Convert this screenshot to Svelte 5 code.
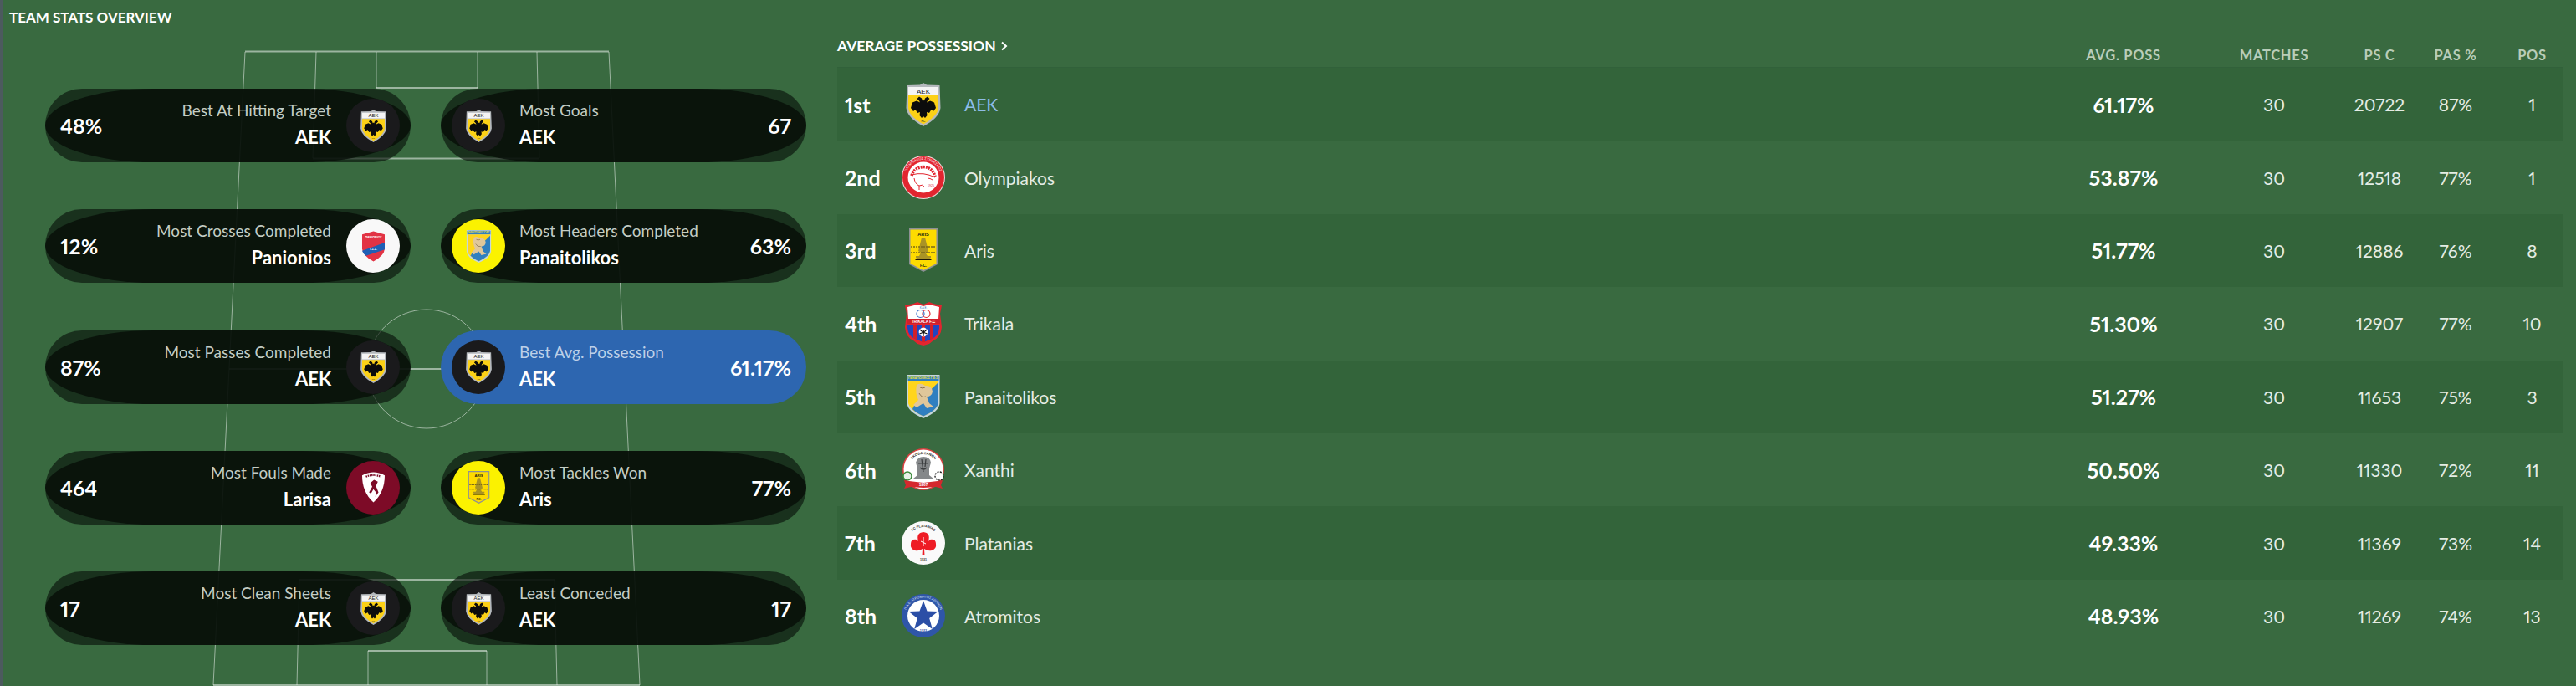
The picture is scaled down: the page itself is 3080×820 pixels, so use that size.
<script>
  const pills = [
    { label: 'Best At Hitting Target', team: 'AEK', value: '48%', crest: 'aek', side: 'left' },
    { label: 'Most Goals', team: 'AEK', value: '67', crest: 'aek', side: 'right' },
    { label: 'Most Crosses Completed', team: 'Panionios', value: '12%', crest: 'panionios', side: 'left', disc: 'white' },
    { label: 'Most Headers Completed', team: 'Panaitolikos', value: '63%', crest: 'panaitolikos', side: 'right', disc: 'yellow' },
    { label: 'Most Passes Completed', team: 'AEK', value: '87%', crest: 'aek', side: 'left' },
    { label: 'Best Avg. Possession', team: 'AEK', value: '61.17%', crest: 'aek', side: 'right', active: true },
    { label: 'Most Fouls Made', team: 'Larisa', value: '464', crest: 'larisa', side: 'left', disc: 'maroon' },
    { label: 'Most Tackles Won', team: 'Aris', value: '77%', crest: 'aris', side: 'right', disc: 'yellow' },
    { label: 'Most Clean Sheets', team: 'AEK', value: '17', crest: 'aek', side: 'left' },
    { label: 'Least Conceded', team: 'AEK', value: '17', crest: 'aek', side: 'right' },
  ];

  const rows = [
    { rank: '1st', crest: 'aek', team: 'AEK', poss: '61.17%', matches: 30, psc: 20722, pas: '87%', pos: 1, link: true },
    { rank: '2nd', crest: 'olympiakos', team: 'Olympiakos', poss: '53.87%', matches: 30, psc: 12518, pas: '77%', pos: 1 },
    { rank: '3rd', crest: 'aris', team: 'Aris', poss: '51.77%', matches: 30, psc: 12886, pas: '76%', pos: 8 },
    { rank: '4th', crest: 'trikala', team: 'Trikala', poss: '51.30%', matches: 30, psc: 12907, pas: '77%', pos: 10 },
    { rank: '5th', crest: 'panaitolikos', team: 'Panaitolikos', poss: '51.27%', matches: 30, psc: 11653, pas: '75%', pos: 3 },
    { rank: '6th', crest: 'xanthi', team: 'Xanthi', poss: '50.50%', matches: 30, psc: 11330, pas: '72%', pos: 11 },
    { rank: '7th', crest: 'platanias', team: 'Platanias', poss: '49.33%', matches: 30, psc: 11369, pas: '73%', pos: 14 },
    { rank: '8th', crest: 'atromitos', team: 'Atromitos', poss: '48.93%', matches: 30, psc: 11269, pas: '74%', pos: 13 },
  ];
</script>

{#snippet crest(kind, size)}
  <svg class="crest" width={size} height={size} viewBox="0 0 52 52">
    {#if kind === 'aek'}
      <path d="M26 0L30 2.5L45.5 3L46.5 30Q45 42 26 52Q7 42 5.5 30L6.5 3L22 2.5Z" fill="#b4b8bc" />
      <rect x="8" y="5" width="36" height="9" fill="#f4f4f4" />
      <text x="26" y="12.6" class="t" font-size="8" text-anchor="middle" fill="#222">AEK</text>
      <path d="M8 15H44V30Q43 40 26 49.5Q9 40 8 30Z" fill="#fcd116" />
      <path d="M21 16.5L24 18.5L25 21.5L26 20.5L27 21.5L28 18.5L31 16.5L33.5 19L31 21.5L30 23.5L34 21.5L39 23.5L41 30L38 34L35.5 32L33 36L30 35L30.5 39L28 42L26 40L24 42L21.5 39L22 35L19 36L16.5 32L14 34L11 30L13 23.5L18 21.5L22 23.5L21 21.5L18.5 19Z" fill="#0c0c0c" />
      <text x="26" y="47" class="t" font-size="2.8" font-weight="700" text-anchor="middle" fill="#333">F.C.</text>
    {:else if kind === 'olympiakos'}
      <circle cx="26" cy="26" r="26" fill="#f0dcdc" />
      <circle cx="26" cy="26" r="25" fill="#e2252f" />
      <path id="oly-ring" d="M5 26A21 21 0 0 1 47 26" fill="none" />
      <text class="t" font-size="4" fill="#fff"><textPath href="#oly-ring" startOffset="50%" text-anchor="middle">ΟΛΥΜΠΙΑΚΟΣ ΣΥΝΔΕΣΜΟΣ</textPath></text>
      <circle cx="26" cy="26" r="18.5" fill="#fff" />
      <path d="M12 24Q15 14 26 13.5Q37 14 40 25" fill="none" stroke="#e2252f" stroke-width="3.6" stroke-dasharray="2 1.1" />
      <path d="M12 23Q26 19 40 26" fill="none" stroke="#e2252f" stroke-width="1" />
      <path d="M15 27Q16 34 21 36L21 41M37 29Q34 27 31 27M21 36Q25 34 27 37" fill="none" stroke="#e2252f" stroke-width="1" />
      <text x="35" y="37" class="t" font-size="3.6" fill="#e2252f" text-anchor="middle">1925</text>
    {:else if kind === 'aris'}
      <path d="M9 0H43V43L26 52L9 43Z" fill="#8d9094" />
      <path d="M10.5 1.5H41.5V42L26 50L10.5 42Z" fill="#fedb00" />
      <text x="26" y="9" class="t" font-size="5.6" font-weight="700" text-anchor="middle" fill="#1a1a10">ARIS</text>
      <path d="M24 11H28L30 19L32 27L29 30L31 33H35V35L32 37H20L17 35V33H21L23 29L20 27L22 19Z" fill="#a99325" />
      <path d="M11 22H41M11 29H41" stroke="#7a6a1a" stroke-width="1.4" stroke-dasharray="2 1" />
      <path d="M18 36H34L36 38H16Z" fill="#1d1a08" />
      <text x="26" y="46" class="t" font-size="4.6" font-weight="700" text-anchor="middle" fill="#1a1a10">F.C.</text>
    {:else if kind === 'trikala'}
      <path d="M4 4L14 2L19 0L26 3L33 0L38 2L48 4L46 14L48 30Q47 42 38 46L33 50L26 52L19 50L14 46Q5 42 4 30L6 14Z" fill="#e2252f" />
      <path d="M7 6L19 3L26 5L33 3L45 6L44 20H8Z" fill="#fff" />
      <circle cx="22.5" cy="14" r="4.5" fill="none" stroke="#3069c6" stroke-width="1.2" />
      <circle cx="29.5" cy="14" r="4.5" fill="none" stroke="#e2252f" stroke-width="1.2" />
      <text x="26" y="7.6" class="t" font-size="3" text-anchor="middle" fill="#3069c6">Κ.Α.Ε.</text>
      <rect x="6" y="20" width="40" height="6" fill="#d11f2b" />
      <text x="26" y="25" class="t" font-size="4.7" font-weight="700" text-anchor="middle" fill="#fff">TRIKALA F.C</text>
      <path d="M7 27H45V31Q44 41 36 44L26 48L16 44Q8 41 7 31Z" fill="#2146c0" />
      <path d="M14 27H18V45L14 43ZM24 27H28V48H24ZM34 27H38V43L34 45Z" fill="#d11f2b" />
      <circle cx="26" cy="36" r="5.4" fill="#fff" />
      <circle cx="26" cy="36" r="2" fill="#111" />
      <path d="M22 33L24 35M30 33L28 35M26 41V38M21.5 38L24 37M30.5 38L28 37" stroke="#111" stroke-width="1.2" />
    {:else if kind === 'panaitolikos'}
      <path d="M6.5 0H45.5V34Q45 44 26 52Q7 44 6.5 34Z" fill="#c5d6de" />
      <rect x="7.5" y="1" width="37" height="6" fill="#2f7fc0" />
      <text x="26" y="5.4" class="t" font-size="3.4" font-weight="700" text-anchor="middle" fill="#f6e23a">ΠΑΝΑΙΤΩΛΙΚΟΣ Γ.Φ.Σ.</text>
      <path d="M8 7H44V33Q43 42 26 49.5Q9 42 8 33Z" fill="#ffd51c" />
      <path d="M44 9V33Q43 42 26 49.5Q16 45 12 40Z" fill="#2f7fc0" />
      <path d="M8 12L8 33Q9 38 13 41L20 24L14 11Z" fill="#ffd51c" />
      <path d="M18 12Q23 9 28 13Q36 12 37 20Q36 26 30 26L33 34L38 38L30 40L26 34L18 39L14 36L20 30Q16 22 18 12Z" fill="#e0c79a" />
      <path d="M21 22Q24 28 29 26M22 15Q25 17 28 15" fill="none" stroke="#8a7450" stroke-width="1" />
    {:else if kind === 'xanthi'}
      <circle cx="26" cy="25" r="25" fill="#d94040" />
      <circle cx="26" cy="25" r="23.5" fill="#fff" />
      <path id="xan-ring" d="M8 25A18 18 0 0 1 44 25" fill="none" />
      <text class="t" font-size="4.2" font-weight="700" fill="#222"><textPath href="#xan-ring" startOffset="50%" text-anchor="middle">SKODA ΞΑΝΘΗ</textPath></text>
      <path d="M17 17Q19 10 26 10Q34 10 35 17L33 24L33 32L38 36H14L19 32L19 24Z" fill="#85888a" />
      <path d="M20 18H32M22 23Q26 27 30 23M24 13L26 28M29 13L28 22" fill="none" stroke="#3a3c3e" stroke-width="1.2" />
      <circle cx="7" cy="33" r="5" fill="#e8f1e8" stroke="#3b8a3b" stroke-width="1.5" />
      <circle cx="45" cy="33" r="5" fill="#fff" stroke="#222" stroke-width="1.4" stroke-dasharray="2 1.4" />
      <path d="M3 38L9 39L26 41L43 39L49 38L47 44L49 48L41 46L26 47L11 46L3 48L5 44Z" fill="#d4282e" />
      <text x="26" y="45" class="t" font-size="4.8" font-weight="700" text-anchor="middle" fill="#fff">1967</text>
    {:else if kind === 'platanias'}
      <circle cx="26" cy="26" r="26" fill="#fafafa" />
      <path id="pla-ring" d="M7 26A19 19 0 0 1 45 26" fill="none" />
      <text class="t" font-size="4" font-weight="700" fill="#333"><textPath href="#pla-ring" startOffset="50%" text-anchor="middle">FC PLATANIAS</textPath></text>
      <path d="M24.5 41L25 33Q21 36 16 35Q10 33 11 27Q11 21 18 22Q19 23 20 24Q17 14 26 13Q35 14 32 24Q33 23 34 22Q41 21 41 27Q42 33 36 35Q31 36 27 33L27.5 41Z" fill="#ee1c25" />
      <path d="M26 19V30M23 24L29 27" stroke="#fff" stroke-width="1" />
      <text x="26" y="47" class="t" font-size="3.6" font-weight="700" text-anchor="middle" fill="#333">1931</text>
    {:else if kind === 'atromitos'}
      <circle cx="26" cy="26" r="26" fill="#2f56a8" />
      <path id="atr-ring" d="M4.5 26A21.5 21.5 0 0 1 47.5 26" fill="none" />
      <text class="t" font-size="3.8" fill="#dfe8f7"><textPath href="#atr-ring" startOffset="50%" text-anchor="middle">Π.Α.Ε. ΑΤΡΟΜΗΤΟΣ ΑΘΗΝΩΝ</textPath></text>
      <circle cx="26" cy="26" r="19" fill="#fff" />
      <path d="M26 8L30.5 20.5L43.5 21L33.2 29L36.8 42L26 34.5L15.2 42L18.8 29L8.5 21L21.5 20.5Z" fill="#2b4ea6" />
      <text x="26" y="45" class="t" font-size="3.8" font-weight="700" text-anchor="middle" fill="#2b4ea6">1923</text>
    {:else if kind === 'panionios'}
      <path d="M26 2L44 7V30Q43 41 26 50Q9 41 8 30V7Z" fill="#e23344" />
      <text x="26" y="13.6" class="t" font-size="4.8" font-weight="700" text-anchor="middle" fill="#fff">ΠΑΝΙΩΝΙΟΣ</text>
      <path d="M8 33L44 20V31L14 41Q9 37 8 33Z" fill="#1f5fb5" />
      <text x="26" y="32.5" class="t" font-size="4.6" font-weight="700" text-anchor="middle" fill="#fff">Γ.Σ.Σ.</text>
    {:else if kind === 'larisa'}
      <path d="M26 2Q35 2 44 7Q44 34 26 50Q8 34 8 7Q17 2 26 2Z" fill="#fff" />
      <path d="M14 9Q26 4 38 9" fill="none" stroke="#7d0b27" stroke-width="3" stroke-dasharray="2 1" />
      <path d="M27 14L33 17L30 24L34 34L29 41L30 34L26 29L22 36L19 34L24 25L21 19Z" fill="#7d0b27" />
    {/if}
  </svg>
{/snippet}

<div class="page">
  <section class="overview">
    <h2 class="title">TEAM STATS OVERVIEW</h2>

    <svg class="pitch" width="990" height="820" viewBox="0 0 990 820">
      <g fill="none" stroke="#fff" stroke-opacity=".5" stroke-width="1">
        <path d="M293 62L255 819M728 62L765 819" />
        <path d="M378 62L374 189M642 62L645 189" />
        <path d="M450 62V105M571 62V105" />
        <path d="M358 693L355 819M663 693L666 819" />
        <path d="M440 778V819M582 778V819" />
        <circle cx="510" cy="441" r="71" />
      </g>
      <g stroke="#fff" stroke-opacity=".5" stroke-width="2" fill="none">
        <path d="M293 61.5H728M450 105H571M374 189.5H645M274 441H749M358 693H663M440 778H582M255 819H765" />
      </g>
    </svg>

    <div class="pills">
      {#each pills as p}
        <div class="pill {p.side}" class:active={p.active}>
          <span class="value">{p.value}</span>
          <div class="who">
            <span class="label">{p.label}</span>
            <span class="team">{p.team}</span>
          </div>
          <div class="disc {p.disc ?? ''}">{@render crest(p.crest, 39)}</div>
        </div>
      {/each}
    </div>
  </section>

  <section class="ranking">
    <div class="cols head">
      <div class="heading">AVERAGE POSSESSION <svg width="9" height="12" viewBox="0 0 9 12"><path d="M2 1.5L7 6L2 10.5" fill="none" stroke="#fff" stroke-width="2" /></svg></div>
      <span>AVG. POSS</span>
      <span>MATCHES</span>
      <span>PS C</span>
      <span>PAS %</span>
      <span>POS</span>
    </div>
    {#each rows as r}
      <div class="cols row">
        <div class="club">
          <span class="rank">{r.rank}</span>
          <span class="badge">{@render crest(r.crest, 52)}</span>
          <span class="name" class:link={r.link}>{r.team}</span>
        </div>
        <strong>{r.poss}</strong>
        <span>{r.matches}</span>
        <span>{r.psc}</span>
        <span>{r.pas}</span>
        <span>{r.pos}</span>
      </div>
    {/each}
  </section>
</div>

<style>
  :global(body) { margin: 0; background: #396a40; }
  .page { width: 3080px; height: 820px; display: flex; background: #396a40; color: #fff; font-family: "Lato", "Liberation Sans", sans-serif; font-variant-numeric: proportional-nums; overflow: hidden; }
  .t { font-family: "Liberation Sans", sans-serif; }
  .crest { display: block; }

  .overview { position: relative; width: 990px; flex: none; box-sizing: border-box; border-left: 3px solid #4c5a5e; }
  .title { margin: 0; position: relative; padding: 12px 0 0 8px; font-size: 17px; line-height: 18px; font-weight: 700; }
  .pitch { position: absolute; left: -3px; top: 0; }
  .pills { position: relative; display: grid; grid-template-columns: 437px 437px; gap: 56.25px 36px; padding: 76px 0 0 51px; }

  .pill { position: relative; height: 88px; display: flex; align-items: center; border-radius: 44px; background: rgba(6, 14, 8, .62); box-sizing: border-box; }
  .pill::before { content: ''; position: absolute; inset: 0; border-radius: 130px / 44px; background: rgba(6, 14, 8, .8); }
  .pill > * { position: relative; }
  .pill.left { padding: 0 13px 0 18px; }
  .pill.right { flex-direction: row-reverse; padding: 0 18px 0 13px; }
  .pill.active { background: #2d66b0; }
  .pill.active::before { display: none; }
  .value { font-size: 25px; font-weight: 700; flex: none; }
  .who { flex: 1; display: flex; flex-direction: column; gap: 9px; min-width: 0; padding-bottom: 4px; }
  .left .who { align-items: flex-end; padding-right: 18px; }
  .right .who { align-items: flex-start; padding-left: 17px; }
  .label { font-size: 19px; line-height: 22px; color: #c4cdc4; }
  .active .label { color: #bcd0e8; }
  .team { font-size: 22px; line-height: 23px; font-weight: 700; }
  .disc { width: 64px; height: 64px; flex: none; border-radius: 50%; background: #1a1a1c; display: flex; align-items: center; justify-content: center; }
  .disc.white { background: #f8f8f8; }
  .disc.yellow { background: #fbf200; }
  .disc.maroon { background: #7d0b27; }

  .ranking { flex: 1; padding: 44px 16px 0 11px; min-width: 0; }
  .cols { display: grid; grid-template-columns: 1fr 180px 180px 72px 110px 73px; align-items: center; text-align: center; }
  .head { height: 36px; border-bottom: 1px solid #31613a; }
  .head span { align-self: end; padding-bottom: 5px; font-size: 16.5px; letter-spacing: .7px; line-height: 18px; font-weight: 700; color: #b9cdb9; }
  .heading { align-self: start; text-align: left; font-size: 17.5px; line-height: 22px; font-weight: 700; display: flex; align-items: center; gap: 5px; }
  .row { height: 87.4px; font-size: 21px; color: #e4ece4; }
  .row:nth-of-type(even) { background: #33643a; }
  .row strong { font-size: 25px; font-weight: 700; color: #fff; }
  .club { display: flex; align-items: center; text-align: left; padding-left: 9px; }
  .rank { width: 64px; font-size: 25px; font-weight: 700; color: #fff; }
  .badge { width: 60px; display: flex; justify-content: center; }
  .name { margin-left: 19px; font-size: 21px; }
  .name.link { color: #8fbde6; }
</style>
